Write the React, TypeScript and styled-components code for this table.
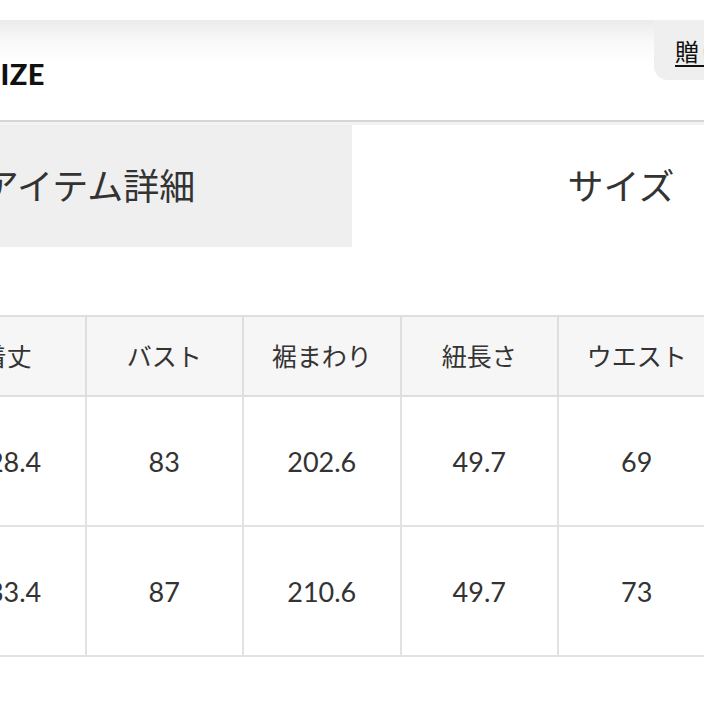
import React from "react";
import styled, { createGlobalStyle } from "styled-components";

const Global = createGlobalStyle`
  html, body { margin: 0; padding: 0; background: #fff; }
  body { width: 704px; height: 704px; overflow: hidden; font-family: "Noto Sans CJK JP", "Noto Sans", sans-serif; color: #333; }
`;

const Page = styled.div`
  width: 704px;
  height: 704px;
  overflow: hidden;
  position: relative;
  padding-top: 20px;
  box-sizing: border-box;
`;

const HeaderBar = styled.header`
  height: 100px;
  display: flex;
  justify-content: space-between;
  align-items: flex-start;
  background: linear-gradient(#ebebeb 0px, #f9f9f9 22px, #fff 45px, #fff 100%);
  border-bottom: 2px solid #d6d6d6;
`;

const Title = styled.h1`
  margin: 36px 0 0 -16px;
  font-family: Lato, "Liberation Sans", sans-serif;
  font-weight: 900;
  font-size: 29px;
  line-height: 36px;
  letter-spacing: 0.5px;
  color: #111;
`;

const GiftButton = styled.button`
  margin-top: 0;
  width: 50px;
  height: 60px;
  border: none;
  border-radius: 0 0 0 14px;
  background: #efefef;
  display: flex;
  align-items: flex-start;
  justify-content: flex-start;
  padding: 18px 0 0 21px;
  font-family: "Noto Sans CJK JP", sans-serif;
  font-size: 24px;
  line-height: 26px;
  color: #111;
  text-decoration: underline;
  text-decoration-thickness: 2px;
  text-underline-offset: 4px;
  box-sizing: border-box;
  white-space: nowrap;
  overflow: hidden;
`;

const Strip = styled.div`
  height: 3px;
  background: #f3f3f3;
`;

const Tabs = styled.nav`
  display: grid;
  grid-template-columns: 526px 538px;
  margin-left: -174px;
  height: 122px;
`;

const Tab = styled.div<{ $active?: boolean }>`
  display: flex;
  align-items: center;
  justify-content: center;
  font-size: 36px;
  color: #333;
  background: ${(p) => (p.$active ? "#efefef" : "#fff")};
  padding-bottom: 4px;
  box-sizing: border-box;
`;

const Table = styled.table`
  margin: 68px 0 0 -73px;
  border-collapse: collapse;
  table-layout: fixed;
  width: 787.5px;
`;

const HeadCell = styled.th`
  width: 155.5px;
  height: 76px;
  background: #f6f6f6;
  border: 2px solid #dedede;
  font-weight: 400;
  font-size: 25px;
  color: #333;
  text-align: center;
  padding: 0 0 2px;
  white-space: nowrap;
`;

const Cell = styled.td`
  height: 128px;
  border: 2px solid #e2e2e2;
  font-family: Lato, "Liberation Sans", sans-serif;
  font-size: 27px;
  color: #333;
  text-align: center;
  padding: 0;
`;

const heads = ["着丈", "バスト", "裾まわり", "紐長さ", "ウエスト"];
const rows = [
  ["128.4", "83", "202.6", "49.7", "69"],
  ["133.4", "87", "210.6", "49.7", "73"],
];

export default function App() {
  return (
    <Page>
      <Global />
      <HeaderBar>
        <Title>SIZE</Title>
        <GiftButton>贈り物</GiftButton>
      </HeaderBar>
      <Strip />
      <Tabs>
        <Tab $active>アイテム詳細</Tab>
        <Tab>サイズ</Tab>
      </Tabs>
      <Table>
        <thead>
          <tr>
            {heads.map((h) => (
              <HeadCell key={h}>{h}</HeadCell>
            ))}
          </tr>
        </thead>
        <tbody>
          {rows.map((r, i) => (
            <tr key={i}>
              {r.map((v, j) => (
                <Cell key={j}>{v}</Cell>
              ))}
            </tr>
          ))}
        </tbody>
      </Table>
    </Page>
  );
}
